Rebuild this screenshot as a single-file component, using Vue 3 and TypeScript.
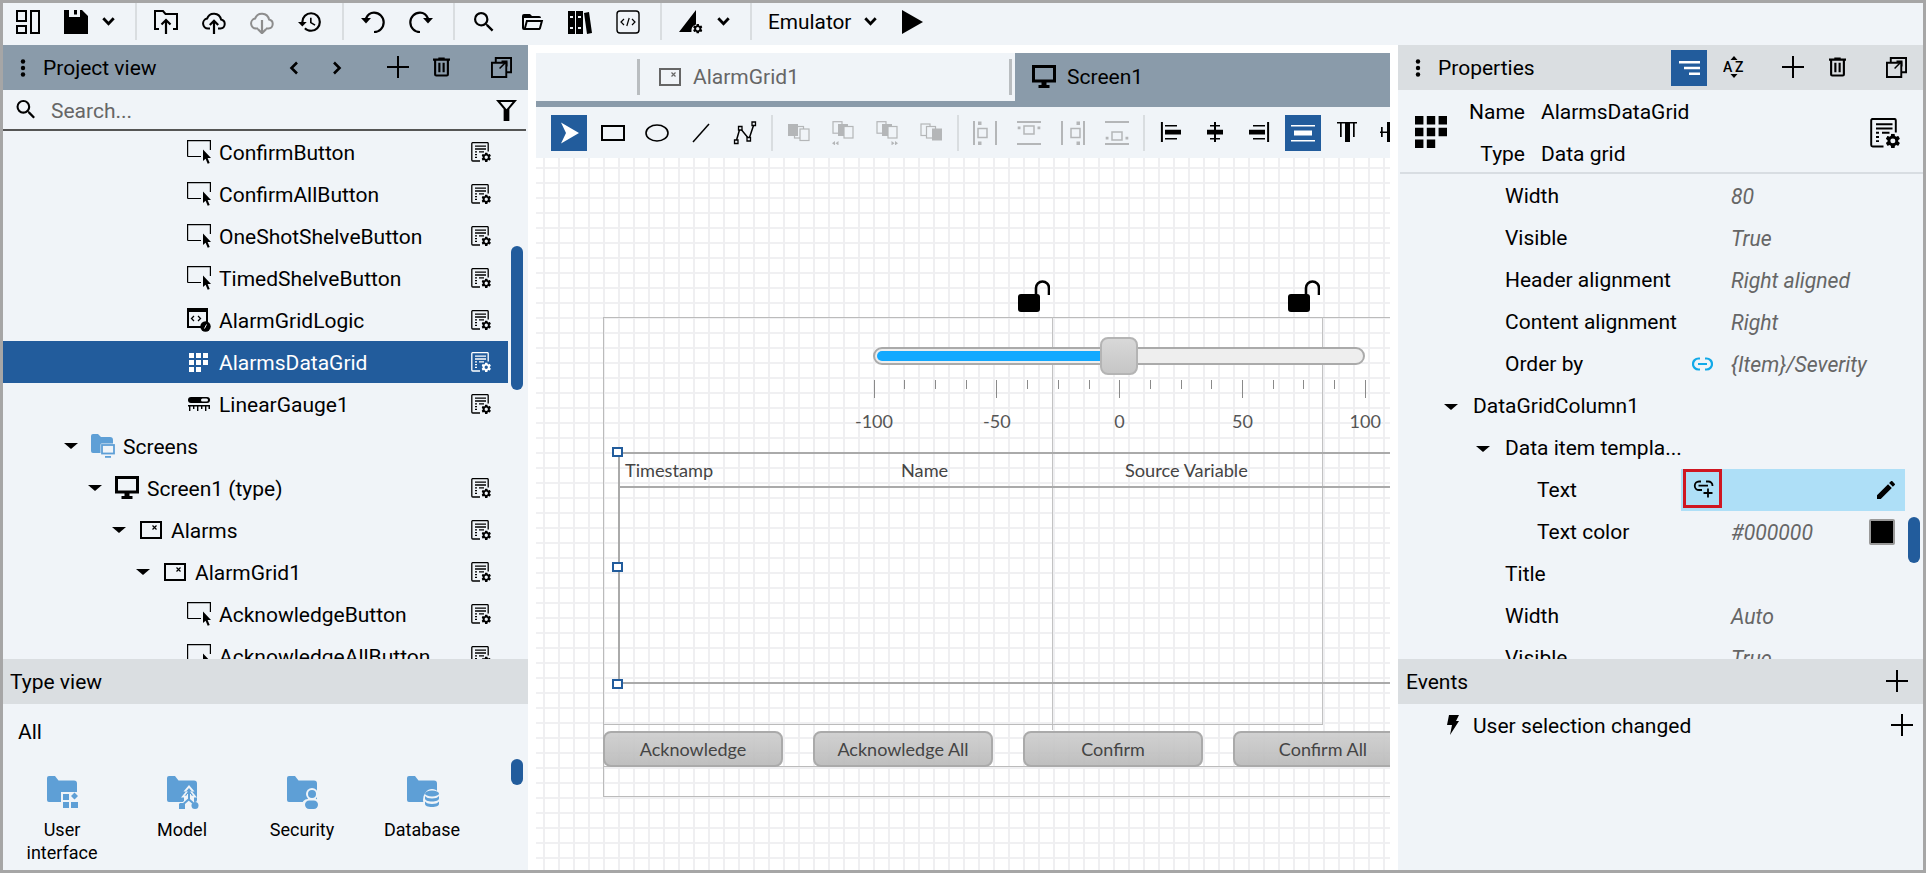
<script setup lang="ts">
interface TreeRow {
  label: string
  level: number
  icon: string
  open?: boolean
  selected?: boolean
  doc?: boolean
}

interface PropRow {
  label: string
  level: number
  value?: string
  caret?: boolean
  link?: string
  pencil?: boolean
  swatch?: boolean
  active?: boolean
}

const treeRows: TreeRow[] = [
  { label: 'ConfirmButton', level: 4, icon: 'button', doc: true },
  { label: 'ConfirmAllButton', level: 4, icon: 'button', doc: true },
  { label: 'OneShotShelveButton', level: 4, icon: 'button', doc: true },
  { label: 'TimedShelveButton', level: 4, icon: 'button', doc: true },
  { label: 'AlarmGridLogic', level: 4, icon: 'script', doc: true },
  { label: 'AlarmsDataGrid', level: 4, icon: 'grid', doc: true, selected: true },
  { label: 'LinearGauge1', level: 4, icon: 'gauge', doc: true },
  { label: 'Screens', level: 0, icon: 'screens', open: true },
  { label: 'Screen1 (type)', level: 1, icon: 'monitor', open: true, doc: true },
  { label: 'Alarms', level: 2, icon: 'panel', open: true, doc: true },
  { label: 'AlarmGrid1', level: 3, icon: 'panel', open: true, doc: true },
  { label: 'AcknowledgeButton', level: 4, icon: 'button', doc: true },
  { label: 'AcknowledgeAllButton', level: 4, icon: 'button', doc: true },
]

const typeItems = [
  { label: 'User interface', icon: 'type-ui' },
  { label: 'Model', icon: 'type-model' },
  { label: 'Security', icon: 'type-security' },
  { label: 'Database', icon: 'type-db' },
]

const propRows: PropRow[] = [
  { label: 'Width', level: 1, value: '80' },
  { label: 'Visible', level: 1, value: 'True' },
  { label: 'Header alignment', level: 1, value: 'Right aligned' },
  { label: 'Content alignment', level: 1, value: 'Right' },
  { label: 'Order by', level: 1, value: '{Item}/Severity', link: 'i-link' },
  { label: 'DataGridColumn1', level: 0, caret: true },
  { label: 'Data item templa...', level: 1, caret: true },
  { label: 'Text', level: 2, link: 'i-link-plus', pencil: true, active: true },
  { label: 'Text color', level: 2, value: '#000000', swatch: true },
  { label: 'Title', level: 1 },
  { label: 'Width', level: 1, value: 'Auto' },
  { label: 'Visible', level: 1, value: 'True' },
]

const toolIcons = [
  { id: 'i-select', active: true },
  { id: 'i-rect' },
  { id: 'i-ellipse' },
  { id: 'i-line' },
  { id: 'i-polyline' },
  { id: 'sep' },
  { id: 'i-front', off: true },
  { id: 'i-forward', off: true },
  { id: 'i-backward', off: true },
  { id: 'i-back', off: true },
  { id: 'sep' },
  { id: 'i-dist-h', off: true },
  { id: 'i-dist-v', off: true },
  { id: 'i-dist-h2', off: true },
  { id: 'i-dist-v2', off: true },
  { id: 'sep' },
  { id: 'i-align-l' },
  { id: 'i-align-c' },
  { id: 'i-align-r' },
  { id: 'i-align-m', active: true },
  { id: 'i-align-t' },
  { id: 'i-align-n' },
]

const scaleTicks = Array.from({ length: 17 }, (_, i) => ({
  left: 337.7 + i * 30.69,
  major: i % 4 === 0,
}))

const scaleLabels = ['-100', '-50', '0', '50', '100'].map((text, i) => ({
  text,
  left: 338 + i * 122.8,
}))

const gridHeaders = [
  { text: 'Timestamp', left: 89 },
  { text: 'Name', left: 365 },
  { text: 'Source Variable', left: 589 },
]

const gridButtons = ['Acknowledge', 'Acknowledge All', 'Confirm', 'Confirm All'].map((text, i) => ({
  text,
  left: 67 + i * 210,
}))

const handleTops = [289, 404, 521]
</script>

<template>
  <div class="frame">
    <svg class="sprite" aria-hidden="true">
      <symbol id="i-layout" viewBox="0 0 24 24">
        <path d="M1 1h9v10H1zM1 16h9v7H1zM15 1h8v22h-8z" fill="none" stroke="currentColor" stroke-width="2" />
      </symbol>
      <symbol id="i-save" viewBox="0 0 24 24">
        <path fill-rule="evenodd" d="M0 0h18l6 6v18H0zM5 0v7h11V0h-3v4.500h-3V0z" fill="currentColor" />
      </symbol>
      <symbol id="i-chevron" viewBox="0 0 12 10">
        <path d="M1.200 2 6 7l4.800-5" fill="none" stroke="currentColor" stroke-width="2.600" />
      </symbol>
      <symbol id="i-publish" viewBox="0 0 24 24">
        <path d="M5 19H1V1h8l2.500 3H23v15h-4" fill="none" stroke="currentColor" stroke-width="2" />
        <path d="M12 24V10M7.500 14.500 12 10l4.500 4.500" fill="none" stroke="currentColor" stroke-width="2.200" />
      </symbol>
      <symbol id="i-cloud-up" viewBox="0 0 24 24">
        <path d="M8 18.500H6a5 5 0 0 1-.9-9.900A7.200 7.200 0 0 1 19 9.400a4.600 4.600 0 0 1-.6 9.100H16" fill="none" stroke="currentColor" stroke-width="2" />
        <path d="M12 24V11M7.800 15 12 10.800 16.200 15" fill="none" stroke="currentColor" stroke-width="2.200" />
      </symbol>
      <symbol id="i-cloud-down" viewBox="0 0 24 24">
        <path d="M8 18.500H6a5 5 0 0 1-.9-9.900A7.200 7.200 0 0 1 19 9.400a4.600 4.600 0 0 1-.6 9.100H16" fill="none" stroke="currentColor" stroke-width="2" />
        <path d="M12 10v13M7.800 19 12 23.200 16.200 19" fill="none" stroke="currentColor" stroke-width="2.200" />
      </symbol>
      <symbol id="i-history" viewBox="1 2 22 20">
        <path fill="currentColor" d="M13.500,8H12V13L16.280,15.540L17,14.330L13.500,12.250V8M13,3A9,9 0 0,0 4,12H1L4.960,16.030L9,12H6A7,7 0 0,1 13,5A7,7 0 0,1 20,12A7,7 0 0,1 13,19C11.070,19 9.320,18.210 8.060,16.940L6.640,18.360C8.270,20 10.500,21 13,21A9,9 0 0,0 22,12A9,9 0 0,0 13,3Z" />
      </symbol>
      <symbol id="i-undo" viewBox="0 0 24 24">
        <path d="M5 8.500C6.400 5 9.200 2.600 13 2.600a9.700 9.700 0 0 1 0 19.400" fill="none" stroke="currentColor" stroke-width="2.200" />
        <path d="M0 8h10l-5 5.600z" fill="currentColor" />
      </symbol>
      <symbol id="i-redo" viewBox="0 0 24 24">
        <path d="M19 8.500C17.600 5 14.800 2.600 11 2.600a9.700 9.700 0 0 0 0 19.400" fill="none" stroke="currentColor" stroke-width="2.200" />
        <path d="M24 8H14l5 5.600z" fill="currentColor" />
      </symbol>
      <symbol id="i-search" viewBox="3 3 18 18">
        <path fill="currentColor" d="M9.500,3A6.500,6.500 0 0,1 16,9.500C16,11.110 15.410,12.590 14.440,13.730L14.710,14H15.500L20.500,19L19,20.500L14,15.500V14.710L13.730,14.440C12.590,15.410 11.110,16 9.500,16A6.500,6.500 0 0,1 3,9.500A6.500,6.500 0 0,1 9.500,3M9.500,5C7,5 5,7 5,9.500C5,12 7,14 9.500,14C12,14 14,12 14,9.500C14,7 12,5 9.500,5Z" />
      </symbol>
      <symbol id="i-folder" viewBox="0 0 24 24">
        <path fill="currentColor" d="M6.100,10L4,18V8H21A2,2 0 0,0 19,6H12L10,4H4A2,2 0 0,0 2,6V18A2,2 0 0,0 4,20H19C19.900,20 20.700,19.400 20.900,18.500L23.200,10H6.100M19,18H6L7.600,12H20.600L19,18Z" />
      </symbol>
      <symbol id="i-books" viewBox="0 0 24 24">
        <path fill-rule="evenodd" fill="currentColor" d="M0 1h7v23H0zM8 1h7v23H8zM16 3l5-1 3 21-5 1zM2 6v2h3V6zM10 6v2h3V6zM2 17v2h3v-2zM10 17v2h3v-2z" />
      </symbol>
      <symbol id="i-code" viewBox="0 0 24 24">
        <rect x="1" y="1" width="22" height="22" rx="3" fill="none" stroke="currentColor" stroke-width="1.400" />
        <path d="M8 9l-3 3 3 3M16 9l3 3-3 3M13.200 8l-2.400 8" fill="none" stroke="currentColor" stroke-width="1.200" />
      </symbol>
      <symbol id="i-cog" viewBox="2 2 20 20">
        <path fill="currentColor" d="M12,15.500A3.500,3.500 0 0,1 8.500,12A3.500,3.500 0 0,1 12,8.500A3.500,3.500 0 0,1 15.500,12A3.500,3.500 0 0,1 12,15.500M19.430,12.970C19.470,12.650 19.500,12.330 19.500,12C19.500,11.670 19.470,11.340 19.430,11L21.540,9.370C21.730,9.220 21.780,8.950 21.660,8.730L19.660,5.270C19.540,5.050 19.270,4.960 19.050,5.050L16.560,6.050C16.040,5.660 15.500,5.320 14.870,5.070L14.500,2.420C14.460,2.180 14.250,2 14,2H10C9.750,2 9.540,2.180 9.500,2.420L9.130,5.070C8.500,5.320 7.960,5.660 7.440,6.050L4.950,5.050C4.730,4.960 4.460,5.050 4.340,5.270L2.340,8.730C2.210,8.950 2.270,9.220 2.460,9.370L4.570,11C4.530,11.340 4.500,11.670 4.500,12C4.500,12.330 4.530,12.650 4.570,12.970L2.460,14.630C2.270,14.780 2.210,15.050 2.340,15.270L4.340,18.730C4.460,18.950 4.730,19.030 4.950,18.950L7.440,17.940C7.960,18.340 8.500,18.680 9.130,18.930L9.500,21.580C9.540,21.820 9.750,22 10,22H14C14.250,22 14.460,21.820 14.500,21.580L14.870,18.930C15.500,18.670 16.040,18.340 16.560,17.940L19.050,18.950C19.270,19.030 19.540,18.950 19.660,18.730L21.660,15.270C21.780,15.050 21.730,14.780 21.540,14.630L19.430,12.970Z" />
      </symbol>
      <symbol id="i-tool" viewBox="0 0 24 24">
        <path d="M17 0v14.500a6.500 6.500 0 0 0-4.600 7.500H0z" fill="currentColor" />
        <use href="#i-cog" x="14" y="14" width="9.500" height="9.500" />
      </symbol>
      <symbol id="i-play" viewBox="0 0 21 24">
        <path d="M0 0l21 12L0 24z" fill="currentColor" />
      </symbol>
      <symbol id="i-dots" viewBox="0 0 6 18">
        <circle cx="3" cy="2.500" r="2.200" fill="currentColor" />
        <circle cx="3" cy="9" r="2.200" fill="currentColor" />
        <circle cx="3" cy="15.500" r="2.200" fill="currentColor" />
      </symbol>
      <symbol id="i-left" viewBox="0 0 10 14">
        <path d="M8 1.500 2.500 7 8 12.500" fill="none" stroke="currentColor" stroke-width="2.600" />
      </symbol>
      <symbol id="i-right" viewBox="0 0 10 14">
        <path d="M2 1.500 7.500 7 2 12.500" fill="none" stroke="currentColor" stroke-width="2.600" />
      </symbol>
      <symbol id="i-plus" viewBox="0 0 22 22">
        <path d="M11 0v22M0 11h22" fill="none" stroke="currentColor" stroke-width="2" />
      </symbol>
      <symbol id="i-trash" viewBox="4 3 16 18">
        <path fill="currentColor" d="M9,3V4H4V6H5V19A2,2 0 0,0 7,21H17A2,2 0 0,0 19,19V6H20V4H15V3H9M7,6H17V19H7V6M9,8V17H11V8H9M13,8V17H15V8H13Z" />
      </symbol>
      <symbol id="i-popout" viewBox="0 0 22 22">
        <path d="M5 5V1h16v15h-4M1 6h15v15H1z" fill="none" stroke="currentColor" stroke-width="2" />
        <path d="M9 12l7-7M11 4.500h5.500V10" fill="none" stroke="currentColor" stroke-width="1.600" />
      </symbol>
      <symbol id="i-filter" viewBox="0 0 22 22">
        <path fill-rule="evenodd" fill="currentColor" d="M0 0h22l-8 9.500V22H8V9.500zM4.600 2.200 11 9.800l6.400-7.600z" />
      </symbol>
      <symbol id="i-doc" viewBox="0 0 20 20">
        <path d="M9 19H1.800a1 1 0 0 1-1-1V1.600a1 1 0 0 1 1-1h14.400a1 1 0 0 1 1 1v8" fill="none" stroke="currentColor" stroke-width="1.300" />
        <path d="M4 4.200h11M4 7h11M4 9.800h2M8 9.800h5M4 12.600h2M4 15.400h2" fill="none" stroke="currentColor" stroke-width="1.300" />
        <use href="#i-cog" x="10.500" y="10.500" width="9.500" height="9.500" />
      </symbol>
      <symbol id="i-button" viewBox="0 0 24 24">
        <path d="M.6 16.500V.6h22.800V10M.6 16.500H14" fill="none" stroke="currentColor" stroke-width="1.200" />
        <path d="M16 9.500V21l2.600-2.300 2.100 5.100 2-.9-2.100-4.800 3.400-.2z" fill="currentColor" />
      </symbol>
      <symbol id="i-script" viewBox="0 0 24 24">
        <path d="M1 1h19v14M1 1v18h13" fill="none" stroke="currentColor" stroke-width="2" />
        <rect x="0" y="0" width="21" height="4" fill="currentColor" />
        <path d="M7 8 4.500 10.500 7 13M11 8l2.500 2.500L11 13" fill="none" stroke="currentColor" stroke-width="1.300" />
        <circle cx="18.500" cy="18.500" r="5.200" fill="currentColor" />
        <path d="M17.500 20.500l2-4" stroke="#f0f4f8" stroke-width="1" />
      </symbol>
      <symbol id="i-grid" viewBox="0 0 19 19">
        <path fill="currentColor" d="M0 0h5v5H0zM7 0h5v5H7zM14 0h5v5h-5zM0 7h5v5H0zM7 7h5v5H7zM14 7h5v5h-5zM0 14h5v5H0zM7 14h5v5H7z" />
      </symbol>
      <symbol id="i-gauge" viewBox="0 0 22 14">
        <rect x="0" y="0" width="22" height="6" rx="3" fill="currentColor" />
        <rect x="13" y="1.500" width="7" height="3" rx="1.500" fill="#f0f4f8" />
        <path d="M0 8h22v1.500H0zM1 9h1.400v5H1zM5 9h1.400v3H5zM9 9h1.400v5H9zM13 9h1.400v3H13zM17 9h1.400v5H17zM20.500 9H22v3h-1.500z" fill="currentColor" />
      </symbol>
      <symbol id="i-screens" viewBox="0 0 24 24">
        <path d="M0 2a2 2 0 0 1 2-2h5l3 3h9a3 3 0 0 1 3 3v13H2a2 2 0 0 1-2-2z" fill="#5e9fd6" />
        <rect x="9.500" y="9.500" width="14" height="11" rx="1.400" fill="#f0f4f8" />
        <rect x="11" y="11" width="12" height="8.500" fill="none" stroke="#5e9fd6" stroke-width="1.800" />
        <path d="M14 22h6v1.800h-6z" fill="#5e9fd6" />
      </symbol>
      <symbol id="i-monitor" viewBox="0 0 24 24">
        <path d="M1.500 1.500h21V16h-21z" fill="none" stroke="currentColor" stroke-width="3" />
        <path d="M9.500 17h5v3h3v3H6.500v-3h3z" fill="currentColor" />
      </symbol>
      <symbol id="i-panel" viewBox="0 0 22 18">
        <path d="M1 1h20v16H1z" fill="none" stroke="currentColor" stroke-width="2" />
        <path d="M12.500 4.500l4 4M16.500 4.500l-4 4" fill="none" stroke="currentColor" stroke-width="1.200" />
      </symbol>
      <symbol id="i-folder-blue" viewBox="0 0 30 26">
        <path d="M0 2a2 2 0 0 1 2-2h6l3.500 4.500H27a3 3 0 0 1 3 3V24a2 2 0 0 1-2 2H2a2 2 0 0 1-2-2z" fill="#5e9fd6" />
      </symbol>
      <symbol id="i-type-ui" viewBox="0 0 32 33">
        <use href="#i-folder-blue" width="30" height="26" />
        <rect x="14" y="16" width="18" height="17" fill="#f0f4f8" />
        <path d="M16 18h6v6h-6zM16 26h6v6h-6zM24 26h7v6h-7zM27.500 16.500l3.500 3.500-3.500 3.500-3.500-3.500z" fill="#5e9fd6" />
      </symbol>
      <symbol id="i-type-model" viewBox="0 0 32 33">
        <use href="#i-folder-blue" width="30" height="26" />
        <path d="M22 9l-5.500 6.500H19l-5 6h3v5h10v-5h3l-5-6h2.500z" fill="#f0f4f8" />
        <path d="M22 12l-3 3.500h2L17.500 20l4.500-1.500L26.500 20 23 15.500h2z" fill="#5e9fd6" />
        <path d="M12 33v-5h4.500l5-4.500M22 18v5.500l4 3.500" fill="none" stroke="#f0f4f8" stroke-width="4" />
        <path d="M14 31v-3h2.500l5-4.500M22 18v5.500l4 3.500" fill="none" stroke="#5e9fd6" stroke-width="2" />
        <path d="M12 27.500h6V33h-6z" fill="#5e9fd6" />
        <circle cx="28" cy="29.500" r="3.500" fill="#5e9fd6" />
      </symbol>
      <symbol id="i-type-security" viewBox="0 0 32 33">
        <use href="#i-folder-blue" width="30" height="26" />
        <circle cx="25" cy="18" r="6" fill="#f0f4f8" />
        <path d="M15 33v-3a6 6 0 0 1 6-7h8a3 3 0 0 1 3 3v7z" fill="#f0f4f8" />
        <circle cx="25" cy="18" r="4" fill="#5e9fd6" />
        <rect x="18" y="24.500" width="13" height="8.500" rx="4.200" fill="#5e9fd6" />
      </symbol>
      <symbol id="i-type-db" viewBox="0 0 32 33">
        <use href="#i-folder-blue" width="30" height="26" />
        <ellipse cx="25" cy="24" rx="9" ry="11" fill="#f0f4f8" />
        <ellipse cx="25" cy="17.500" rx="7" ry="3" fill="#5e9fd6" />
        <path d="M18 20v2.500c0 1.700 3 3 7 3s7-1.300 7-3V20c-1 1.700-4 2.500-7 2.500S19 21.700 18 20zM18 25.500V28c0 1.700 3 3 7 3s7-1.300 7-3v-2.500c-1 1.700-4 2.500-7 2.500s-6-.8-7-2.500z" fill="#5e9fd6" />
      </symbol>
      <symbol id="i-sort" viewBox="0 0 21 14">
        <path d="M0 1.200h21M5 7h16M10 12.800h11" fill="none" stroke="currentColor" stroke-width="2.400" />
      </symbol>
      <symbol id="i-link" viewBox="0 0 21 14">
        <path d="M8 1.500H6.500a5.500 5.500 0 0 0 0 11H8M13 1.500h1.500a5.500 5.500 0 0 1 0 11H13M6 7h9" fill="none" stroke="currentColor" stroke-width="2.200" />
      </symbol>
      <symbol id="i-link-plus" viewBox="0 0 21 18">
        <path d="M8 1.500H6a4.200 4.200 0 0 0 0 8.500h3M13 1.500h2a4.200 4.200 0 0 1 4.500 4.500M5.500 5.700H15" fill="none" stroke="currentColor" stroke-width="1.800" />
        <path d="M15 8.500v9M10.500 13h9" fill="none" stroke="currentColor" stroke-width="1.800" />
      </symbol>
      <symbol id="i-pencil" viewBox="3 3 18 18">
        <path fill="currentColor" d="M20.710,7.040C21.100,6.650 21.100,6 20.710,5.630L18.370,3.290C18,2.900 17.350,2.900 16.960,3.290L15.120,5.120L18.870,8.870M3,17.250V21H6.750L17.810,9.930L14.060,6.180L3,17.250Z" />
      </symbol>
      <symbol id="i-bolt" viewBox="0 0 12 20">
        <path d="M2 0h10L9 6h3L3 20l2-10H0z" fill="currentColor" />
      </symbol>
      <symbol id="i-select" viewBox="0 0 24 24">
        <path d="M4 1.500 22 12 4 22.500 9 12z" fill="currentColor" />
      </symbol>
      <symbol id="i-rect" viewBox="0 0 24 24">
        <rect x="1" y="5" width="22" height="14" fill="none" stroke="currentColor" stroke-width="2" />
      </symbol>
      <symbol id="i-ellipse" viewBox="0 0 24 24">
        <ellipse cx="12" cy="12" rx="11" ry="8" fill="none" stroke="currentColor" stroke-width="1.600" />
      </symbol>
      <symbol id="i-line" viewBox="0 0 24 24">
        <path d="M4 21 20 3" fill="none" stroke="currentColor" stroke-width="1.500" />
      </symbol>
      <symbol id="i-polyline" viewBox="0 0 24 24">
        <path d="M3 21 7 7l9 11L21 3" fill="none" stroke="currentColor" stroke-width="1.500" />
        <path d="M1.500 19h3.500v3.500H1.500zM5.500 5.500H9V9H5.500zM14 16.500h3.500V20H14zM19 1h3.500v3.500H19z" fill="#f0f4f8" stroke="currentColor" stroke-width="1.300" />
      </symbol>
      <symbol id="i-front" viewBox="0 0 24 24">
        <rect x="1" y="3" width="10" height="12" fill="currentColor" />
        <rect x="7.500" y="5.500" width="9" height="11.500" fill="none" stroke="currentColor" stroke-width="1.200" />
        <rect x="13" y="8" width="9" height="11.500" fill="#f0f4f8" stroke="currentColor" stroke-width="1.200" />
      </symbol>
      <symbol id="i-forward" viewBox="0 0 24 24">
        <rect x="2" y=".7" width="9" height="11.500" fill="none" stroke="currentColor" stroke-width="1.200" />
        <rect x="7" y="3" width="10" height="12" fill="currentColor" />
        <rect x="13" y="5.500" width="9" height="11.500" fill="#f0f4f8" stroke="currentColor" stroke-width="1.200" />
        <path d="M4 20l-3 2.200L4 24.400zM7.500 20l-3 2.200 3 2.200z" fill="currentColor" />
      </symbol>
      <symbol id="i-backward" viewBox="0 0 24 24">
        <rect x="2" y=".7" width="9" height="11.500" fill="none" stroke="currentColor" stroke-width="1.200" />
        <rect x="7" y="3" width="10" height="12" fill="currentColor" />
        <rect x="13" y="5.500" width="9" height="11.500" fill="#f0f4f8" stroke="currentColor" stroke-width="1.200" />
        <path d="M16.500 20l3 2.200-3 2.200zM20 20l3 2.200-3 2.200z" fill="currentColor" />
      </symbol>
      <symbol id="i-back" viewBox="0 0 24 24">
        <rect x="2" y="3" width="9" height="11.500" fill="none" stroke="currentColor" stroke-width="1.200" />
        <rect x="7.500" y="5.500" width="9" height="11.500" fill="#f0f4f8" stroke="currentColor" stroke-width="1.200" />
        <rect x="13" y="7.500" width="10" height="12" fill="currentColor" />
      </symbol>
      <symbol id="i-dist-h" viewBox="0 0 24 24">
        <path d="M1 0v24M23 0v24" fill="none" stroke="currentColor" stroke-width="2" />
        <path d="M5 .5h3.500V4H5zM5 20.500h3.500V24H5z" fill="currentColor" />
        <rect x="5" y="7.500" width="9" height="9" fill="none" stroke="currentColor" stroke-width="1.500" />
      </symbol>
      <symbol id="i-dist-v" viewBox="0 0 24 24">
        <path d="M0 1h24M0 23h24" fill="none" stroke="currentColor" stroke-width="1.800" />
        <path d="M.7 5.500h2.800v2.800H.7zM20.500 5.500h2.800v2.800h-2.800z" fill="currentColor" />
        <rect x="7" y="5" width="10" height="8" fill="none" stroke="currentColor" stroke-width="1.500" />
      </symbol>
      <symbol id="i-dist-h2" viewBox="0 0 24 24">
        <path d="M1 0v24M23 0v24" fill="none" stroke="currentColor" stroke-width="2" />
        <path d="M15.500 .5H19V4h-3.500zM15.500 20.500H19V24h-3.500z" fill="currentColor" />
        <rect x="10" y="7.500" width="9" height="9" fill="none" stroke="currentColor" stroke-width="1.500" />
      </symbol>
      <symbol id="i-dist-v2" viewBox="0 0 24 24">
        <path d="M0 1h24M0 23h24" fill="none" stroke="currentColor" stroke-width="1.800" />
        <path d="M.7 15.700h2.800v2.800H.7zM20.500 15.700h2.800v2.800h-2.800z" fill="currentColor" />
        <rect x="7" y="11" width="10" height="8" fill="none" stroke="currentColor" stroke-width="1.500" />
      </symbol>
      <symbol id="i-align-l" viewBox="-1 -1 24 24">
        <path d="M1.900 0v20" stroke="currentColor" stroke-width="2" />
        <path d="M5 3h12v1.500H5zM5 7.700h16v4.700H5zM5 16h12v1.500H5z" fill="currentColor" />
      </symbol>
      <symbol id="i-align-c" viewBox="-1 -1 24 24">
        <path d="M11 0v20" stroke="currentColor" stroke-width="2" />
        <path d="M6 3h10v1.500H6zM3 7.700h16v4.700H3zM6 16h10v1.500H6z" fill="currentColor" />
      </symbol>
      <symbol id="i-align-r" viewBox="-1 -1 24 24">
        <path d="M20.100 0v20" stroke="currentColor" stroke-width="2" />
        <path d="M5 3h12v1.500H5zM1 7.700h16v4.700H1zM5 16h12v1.500H5z" fill="currentColor" />
      </symbol>
      <symbol id="i-align-m" viewBox="0 0 24 24">
        <path d="M0 4h24v1.500H0zM0 19h24v1.500H0zM3 9.500h18v5H3z" fill="currentColor" />
      </symbol>
      <symbol id="i-align-t" viewBox="-1 -1 24 24">
        <path d="M1 0h20v1.500H1zM4 1.500h1.700V15H4zM9 1.500h5V20H9zM17 1.500h1.700V15H17z" fill="currentColor" />
      </symbol>
      <symbol id="i-align-n" viewBox="-1 -1 24 24">
        <path d="M1 5h1.700v10H1zM0 9.500h22V11H0zM7 0h5v20H7z" fill="currentColor" />
      </symbol>
    </svg>

    <header class="toolbar">
      <div class="tool-group first">
        <svg class="ico-24"><use href="#i-layout" /></svg>
        <svg class="ico-24"><use href="#i-save" /></svg>
        <svg class="chev tight"><use href="#i-chevron" /></svg>
      </div>
      <div class="tool-group">
        <svg class="ico-24"><use href="#i-publish" /></svg>
        <svg class="ico-24"><use href="#i-cloud-up" /></svg>
        <svg class="ico-24 muted"><use href="#i-cloud-down" /></svg>
        <svg class="ico-24"><use href="#i-history" /></svg>
      </div>
      <div class="tool-group">
        <svg class="ico-24"><use href="#i-undo" /></svg>
        <svg class="ico-24"><use href="#i-redo" /></svg>
      </div>
      <div class="tool-group">
        <svg class="ico-24 small"><use href="#i-search" /></svg>
        <svg class="ico-24"><use href="#i-folder" /></svg>
        <svg class="ico-24"><use href="#i-books" /></svg>
        <svg class="ico-24"><use href="#i-code" /></svg>
      </div>
      <div class="tool-group">
        <svg class="ico-24"><use href="#i-tool" /></svg>
        <svg class="chev tight"><use href="#i-chevron" /></svg>
      </div>
      <div class="tool-group last">
        <span class="emulator">Emulator</span>
        <svg class="chev"><use href="#i-chevron" /></svg>
        <svg class="play"><use href="#i-play" /></svg>
      </div>
    </header>

    <main class="main">
      <aside class="left">
        <div class="pane-head dark">
          <svg class="dots"><use href="#i-dots" /></svg>
          <span class="pane-title">Project view</span>
          <svg class="nav nav-left"><use href="#i-left" /></svg>
          <svg class="nav nav-right"><use href="#i-right" /></svg>
          <svg class="plus head-plus"><use href="#i-plus" /></svg>
          <svg class="trash"><use href="#i-trash" /></svg>
          <svg class="popout"><use href="#i-popout" /></svg>
        </div>
        <div class="search">
          <svg class="search-ico"><use href="#i-search" /></svg>
          <span class="search-text">Search...</span>
          <svg class="filter"><use href="#i-filter" /></svg>
        </div>
        <div class="tree">
          <div
            v-for="row in treeRows"
            :key="row.label"
            class="tree-row"
            :class="{ selected: row.selected }"
            :style="{ paddingLeft: `${61 + row.level * 24}px` }"
          >
            <span class="caret-slot"><span v-if="row.open" class="caret" /></span>
            <svg class="tree-ico" :class="`ico-${row.icon}`"><use :href="`#i-${row.icon}`" /></svg>
            <span class="tree-label">{{ row.label }}</span>
            <svg v-if="row.doc" class="doc"><use href="#i-doc" /></svg>
          </div>
          <div class="thumb tree-thumb" />
        </div>
        <div class="pane-head light">
          <span class="sub-title">Type view</span>
        </div>
        <div class="types">
          <div class="types-all">All</div>
          <div class="type-grid">
            <div v-for="item in typeItems" :key="item.label" class="type-item">
              <svg class="type-ico"><use :href="`#i-${item.icon}`" /></svg>
              <span class="type-label">{{ item.label }}</span>
            </div>
          </div>
          <div class="thumb types-thumb" />
        </div>
      </aside>

      <section class="center">
        <div class="tabs">
          <div class="tab-gap" />
          <div class="tab">
            <div class="tab-inner">
              <svg class="tab-ico"><use href="#i-panel" /></svg>
              <span>AlarmGrid1</span>
            </div>
          </div>
          <div class="tab active">
            <svg class="tab-monitor"><use href="#i-monitor" /></svg>
            <span>Screen1</span>
          </div>
        </div>
        <div class="draw-tools">
          <template v-for="(tool, i) in toolIcons" :key="i">
            <span v-if="tool.id === 'sep'" class="draw-sep" />
            <span v-else class="draw-btn" :class="{ active: tool.active, off: tool.off }">
              <svg class="draw-ico"><use :href="`#${tool.id}`" /></svg>
            </span>
          </template>
        </div>
        <div class="canvas">
          <div class="outer" />
          <div class="vline" style="left: 516px; top: 159px; height: 413px" />
          <div class="vline" style="left: 786px; top: 159px; height: 407px" />
          <div class="hline" style="left: 67px; top: 566px; width: 720px" />
          <div class="hline" style="left: 67px; top: 608px; width: 900px" />

          <svg class="lock" style="left: 482px" viewBox="0 0 32 32">
            <path d="M18 16V8a6.500 6.500 0 0 1 13 0v7" fill="none" stroke="#000" stroke-width="2.600" />
            <rect x="0" y="14" width="22" height="18" rx="3" fill="#000" />
          </svg>
          <svg class="lock" style="left: 752px" viewBox="0 0 32 32">
            <path d="M18 16V8a6.500 6.500 0 0 1 13 0v7" fill="none" stroke="#000" stroke-width="2.600" />
            <rect x="0" y="14" width="22" height="18" rx="3" fill="#000" />
          </svg>

          <div class="track"><div class="fill" /></div>
          <div class="knob" />
          <div
            v-for="tick in scaleTicks"
            :key="tick.left"
            class="tick"
            :class="{ major: tick.major }"
            :style="{ left: `${tick.left}px` }"
          />
          <span
            v-for="label in scaleLabels"
            :key="label.text"
            class="scale-label"
            :style="{ left: `${label.left}px` }"
          >{{ label.text }}</span>

          <div class="grid-line top" />
          <div class="grid-line head" />
          <div class="grid-line bottom" />
          <div class="grid-line side" />
          <span
            v-for="head in gridHeaders"
            :key="head.text"
            class="grid-head"
            :style="{ left: `${head.left}px` }"
          >{{ head.text }}</span>
          <div
            v-for="top in handleTops"
            :key="top"
            class="handle"
            :style="{ top: `${top}px` }"
          />

          <div
            v-for="btn in gridButtons"
            :key="btn.text"
            class="grid-btn"
            :style="{ left: `${btn.left}px` }"
          >{{ btn.text }}</div>
        </div>
      </section>

      <aside class="right">
        <div class="pane-head light">
          <svg class="dots props-dots"><use href="#i-dots" /></svg>
          <span class="pane-title props-title">Properties</span>
          <span class="sort-btn"><svg class="sort"><use href="#i-sort" /></svg></span>
          <svg class="az" viewBox="0 0 22 22">
            <path d="M11 0 7.500 4h7zM11 22l-3.500-4h7z" fill="currentColor" />
            <text x="0" y="16" class="az-text">A</text>
            <text x="12" y="16" class="az-text">Z</text>
          </svg>
          <svg class="plus props-plus"><use href="#i-plus" /></svg>
          <svg class="trash props-trash"><use href="#i-trash" /></svg>
          <svg class="popout props-popout"><use href="#i-popout" /></svg>
        </div>
        <div class="info">
          <svg class="info-grid"><use href="#i-grid" /></svg>
          <div class="info-table">
            <span class="info-key">Name</span><span>AlarmsDataGrid</span>
            <span class="info-key">Type</span><span>Data grid</span>
          </div>
          <svg class="info-doc"><use href="#i-doc" /></svg>
        </div>
        <div class="props">
          <div
            v-for="(row, i) in propRows"
            :key="i"
            class="prop-row"
          >
            <div class="prop-label" :style="{ paddingLeft: `${75 + row.level * 32}px` }">
              <span v-if="row.caret" class="caret prop-caret" />
              {{ row.label }}
            </div>
            <div class="prop-value" :class="{ active: row.active }">
              <span class="link-slot" :class="{ boxed: row.active }">
                <svg v-if="row.link" class="link" :class="row.link"><use :href="`#${row.link}`" /></svg>
              </span>
              <span class="value-text">{{ row.value }}</span>
              <svg v-if="row.pencil" class="pencil"><use href="#i-pencil" /></svg>
              <span v-if="row.swatch" class="swatch" />
            </div>
          </div>
          <div class="thumb props-thumb" />
        </div>
        <div class="pane-head light">
          <span class="sub-title events-title">Events</span>
          <svg class="plus events-plus"><use href="#i-plus" /></svg>
        </div>
        <div class="events">
          <div class="event-row">
            <svg class="bolt"><use href="#i-bolt" /></svg>
            <span class="event-label">User selection changed</span>
            <svg class="plus event-plus"><use href="#i-plus" /></svg>
          </div>
        </div>
      </aside>
    </main>
  </div>
</template>

<style>
html,
body {
  margin: 0;
  background: #fff;
}
</style>

<style scoped>
.frame {
  position: relative;
  width: 1926px;
  height: 873px;
  box-sizing: border-box;
  border: 3px solid #a6a6a6;
  background: #fff;
  display: flex;
  flex-direction: column;
  overflow: hidden;
  font-family: Roboto, sans-serif;
  font-size: 21px;
  color: #000;
}

.sprite {
  position: absolute;
  width: 0;
  height: 0;
}

/* top toolbar */
.toolbar {
  height: 42px;
  flex: none;
  display: flex;
  align-items: flex-start;
  background: #f0f4f8;
  padding-left: 13px;
}

.tool-group {
  display: flex;
  align-items: center;
  gap: 24px;
  height: 37px;
  padding: 0 20px 0 17px;
  border-right: 2px solid #d9dde0;
}

.tool-group.first {
  padding-left: 0;
}

.tool-group.last {
  border-right: 0;
  gap: 0;
}

.ico-24 {
  width: 24px;
  height: 24px;
  flex: none;
}

.ico-24.small {
  padding: 2px;
  box-sizing: border-box;
}

.muted {
  color: #8d8d8d;
}

.chev {
  width: 13px;
  height: 11px;
  margin-left: 13px;
}

.chev.tight {
  margin-left: -10px;
}

.play {
  width: 21px;
  height: 24px;
  margin-left: 25px;
}

.emulator {
  font-size: 20.800px;
  margin-left: -1px;
}

.main {
  flex: 1;
  min-height: 0;
  display: flex;
}

/* left pane */
.left {
  width: 525px;
  flex: none;
  display: flex;
  flex-direction: column;
  background: #f0f4f8;
}

.pane-head {
  position: relative;
  height: 45px;
  flex: none;
  display: flex;
  align-items: center;
}

.pane-head.dark {
  background: #8a9baa;
}

.pane-head.light {
  background: #dadee1;
}

.dots {
  width: 6px;
  height: 18px;
  margin-left: 17px;
}

.pane-title {
  margin-left: 17px;
}

.nav {
  position: absolute;
  width: 10px;
  height: 14px;
  top: 16px;
}

.nav-left {
  left: 286px;
}

.nav-right {
  left: 329px;
}

.plus {
  width: 22px;
  height: 22px;
  flex: none;
}

.head-plus {
  position: absolute;
  left: 384px;
  top: 11px;
}

.trash {
  position: absolute;
  left: 430px;
  top: 11px;
  width: 17px;
  height: 22px;
}

.popout {
  position: absolute;
  left: 488px;
  top: 12px;
  width: 21px;
  height: 21px;
}

.search {
  position: relative;
  width: 523px;
  height: 41px;
  flex: none;
  box-sizing: border-box;
  border-bottom: 2px solid #555;
  display: flex;
  align-items: center;
}

.search-ico {
  width: 20px;
  height: 19px;
  margin-left: 13px;
}

.search-text {
  margin: 2px 0 0 15px;
  color: #666;
}

.filter {
  position: absolute;
  left: 493px;
  top: 10px;
  width: 21px;
  height: 21px;
}

.tree {
  position: relative;
  flex: 1;
  min-height: 0;
  overflow: hidden;
}

.tree-row {
  position: relative;
  width: 505px;
  height: 42px;
  box-sizing: border-box;
  display: flex;
  align-items: center;
}

.tree-row.selected {
  background: #225c9c;
  color: #fff;
}

.tree-label {
  margin-top: 2px;
}

.caret-slot {
  width: 27px;
  flex: none;
  display: flex;
}

.caret {
  display: inline-block;
  width: 0;
  height: 0;
  border-left: 7px solid transparent;
  border-right: 7px solid transparent;
  border-top: 6px solid #000;
}

.tree-ico {
  width: 24px;
  height: 24px;
  flex: none;
  margin-right: 8px;
}

.ico-panel {
  width: 22px;
  height: 18px;
  margin-left: 1px;
  margin-right: 9px;
}

.ico-grid {
  width: 19px;
  height: 19px;
  margin-left: 2px;
  margin-right: 11px;
}

.ico-gauge {
  width: 22px;
  height: 14px;
  margin-left: 1px;
  margin-right: 9px;
}

.doc {
  position: absolute;
  left: 468px;
  top: 11px;
  width: 20px;
  height: 20px;
}

.thumb {
  position: absolute;
  width: 12px;
  border-radius: 6px;
  background: #225c9c;
}

.tree-thumb {
  left: 508px;
  top: 115px;
  height: 144px;
}

.sub-title {
  margin-left: 7px;
}

.types {
  position: relative;
  height: 166px;
  flex: none;
  overflow: hidden;
}

.types-all {
  margin: 17px 0 0 15px;
  height: 22px;
  line-height: 22px;
}

.type-grid {
  display: grid;
  grid-template-columns: repeat(4, 120px);
  margin: 33px 0 0 -1px;
}

.type-item {
  display: flex;
  flex-direction: column;
  align-items: center;
}

.type-ico {
  width: 32px;
  height: 33px;
  margin-left: 2px;
}

.type-label {
  margin-top: 9px;
  width: 90px;
  font-size: 18px;
  line-height: 23px;
  text-align: center;
}

.types-thumb {
  left: 508px;
  top: 55px;
  height: 26px;
}

/* center */
.center {
  flex: none;
  width: 870px;
  box-sizing: border-box;
  padding: 8px 8px 0;
  display: flex;
  flex-direction: column;
}

.tabs {
  height: 54px;
  flex: none;
  display: flex;
  border-bottom: 6px solid #8a9baa;
  box-sizing: border-box;
}

.tab-gap {
  width: 101px;
  background: #f0f4f8;
}

.tab {
  width: 378px;
  background: #f0f4f8;
  display: flex;
  align-items: center;
  color: #666;
}

.tab-inner {
  width: 100%;
  height: 36px;
  box-sizing: border-box;
  display: flex;
  align-items: center;
  gap: 12px;
  padding-left: 19px;
  border-left: 3px solid #b9bdc0;
  border-right: 3px solid #b9bdc0;
  margin-right: 3px;
}

.tab-ico {
  width: 22px;
  height: 18px;
}

.tab.active {
  flex: 1;
  background: #8a9baa;
  color: #000;
  gap: 11px;
  padding-left: 17px;
  box-sizing: border-box;
}

.tab-monitor {
  width: 24px;
  height: 24px;
}

.draw-tools {
  height: 51px;
  flex: none;
  box-sizing: border-box;
  background: #f0f4f8;
  padding: 8px 0 0 15px;
  display: flex;
  align-items: flex-start;
  overflow: hidden;
  gap: 8px;
}

.draw-btn {
  width: 36px;
  height: 36px;
  flex: none;
  display: flex;
  align-items: center;
  justify-content: center;
}

.draw-btn.active {
  background: #225c9c;
  color: #fff;
}

.draw-btn.off {
  color: #b4b6b8;
}

.draw-ico {
  width: 24px;
  height: 24px;
}

.draw-sep {
  width: 2px;
  height: 36px;
  flex: none;
  background: #d9dde0;
}

.canvas {
  position: relative;
  flex: 1;
  min-height: 0;
  overflow: hidden;
  background-color: #fff;
  background-image:
    linear-gradient(to right, #efeff1 2px, transparent 2px),
    linear-gradient(to bottom, #f0f0f2 2px, transparent 2px);
  background-size: 15px 15px;
  background-position: 7px 9px;
}

.outer {
  position: absolute;
  left: 67px;
  top: 159px;
  width: 900px;
  height: 480px;
  box-sizing: border-box;
  border: 1px solid #bbb;
}

.vline {
  position: absolute;
  width: 1px;
  background: #c2c2c2;
}

.hline {
  position: absolute;
  height: 1px;
  background: #bbb;
}

.lock {
  position: absolute;
  top: 122px;
  width: 32px;
  height: 32px;
}

.track {
  position: absolute;
  left: 337px;
  top: 189px;
  width: 492px;
  height: 18px;
  box-sizing: border-box;
  border: 2.500px solid #aaa;
  border-radius: 9px;
  background: #eee;
}

.fill {
  position: absolute;
  left: 1.500px;
  top: 1.500px;
  width: 226px;
  height: 10px;
  border-radius: 5px 0 0 5px;
  background: #12a9ff;
}

.knob {
  position: absolute;
  left: 564px;
  top: 179px;
  width: 38px;
  height: 38px;
  box-sizing: border-box;
  border: 2px solid #b4b4b4;
  border-radius: 8px;
  background: linear-gradient(#d8d8d8, #c6c6c6);
}

.tick {
  position: absolute;
  top: 222px;
  width: 1px;
  height: 9px;
  background: #8a8a8a;
}

.tick.major {
  height: 18px;
}

.scale-label {
  position: absolute;
  top: 253px;
  transform: translateX(-50%);
  font-family: Lato, sans-serif;
  font-size: 18px;
  line-height: 20px;
  color: #555;
}

.grid-line {
  position: absolute;
  background: #aaa;
}

.grid-line.top {
  left: 86px;
  top: 294px;
  width: 800px;
  height: 2px;
}

.grid-line.head {
  left: 82px;
  top: 328px;
  width: 800px;
  height: 2px;
}

.grid-line.bottom {
  left: 86px;
  top: 524px;
  width: 800px;
  height: 2px;
}

.grid-line.side {
  left: 82px;
  top: 294px;
  width: 2px;
  height: 231px;
}

.grid-head {
  position: absolute;
  top: 302px;
  font-family: Lato, sans-serif;
  font-size: 18.200px;
  line-height: 20px;
  color: #444;
}

.handle {
  position: absolute;
  left: 76px;
  width: 11px;
  height: 10px;
  box-sizing: border-box;
  border: 2px solid #225c9c;
  background: #fff;
}

.grid-btn {
  position: absolute;
  top: 573px;
  width: 180px;
  height: 36px;
  box-sizing: border-box;
  border: 2px solid #aaa;
  border-radius: 8px;
  background: linear-gradient(rgba(205, 205, 205, 0.92), rgba(186, 186, 186, 0.92));
  display: flex;
  align-items: center;
  justify-content: center;
  font-family: Lato, sans-serif;
  font-size: 18px;
  color: #444;
}

/* right pane */
.right {
  flex: none;
  width: 525px;
  display: flex;
  flex-direction: column;
  background: #f0f4f8;
}

.props-dots {
  margin-left: 17px;
}

.props-title {
  margin-left: 17px;
}

.sort-btn {
  position: absolute;
  left: 273px;
  top: 5px;
  width: 36px;
  height: 36px;
  background: #225c9c;
  color: #fff;
  display: flex;
  align-items: center;
  justify-content: center;
}

.sort {
  width: 21px;
  height: 14px;
}

.az {
  position: absolute;
  left: 325px;
  top: 11px;
  width: 22px;
  height: 22px;
}

.az-text {
  font-family: Roboto, sans-serif;
  font-size: 14px;
  font-weight: 500;
}

.props-plus {
  position: absolute;
  left: 384px;
  top: 11px;
}

.props-trash {
  left: 431px;
}

.props-popout {
  left: 488px;
}

.info {
  position: relative;
  height: 84px;
  flex: none;
  box-sizing: border-box;
  border-bottom: 2px solid #d8dde2;
  margin-left: 2px;
}

.info-grid {
  position: absolute;
  left: 15px;
  top: 26px;
  width: 32px;
  height: 32px;
}

.info-table {
  position: absolute;
  left: 60px;
  top: 1px;
  display: grid;
  grid-template-columns: 65px auto;
  column-gap: 16px;
  grid-auto-rows: 42px;
  align-items: center;
}

.info-key {
  text-align: right;
}

.info-doc {
  position: absolute;
  left: 470px;
  top: 28px;
  width: 30px;
  height: 30px;
}

.props {
  position: relative;
  flex: 1;
  min-height: 0;
  overflow: hidden;
  padding-top: 1px;
}

.prop-row {
  height: 42px;
  display: flex;
  align-items: center;
}

.prop-label {
  position: relative;
  width: 283px;
  flex: none;
  box-sizing: border-box;
  white-space: nowrap;
}

.prop-caret {
  position: absolute;
  margin-left: -29px;
  top: 10px;
}

.prop-value {
  position: relative;
  width: 224px;
  height: 42px;
  flex: none;
  display: flex;
  align-items: center;
  box-sizing: border-box;
}

.prop-value.active {
  background: #aedff7;
}

.link-slot {
  width: 50px;
  flex: none;
  display: flex;
  align-items: center;
  padding-left: 11px;
  box-sizing: border-box;
}

.link-slot.boxed {
  position: absolute;
  left: 2px;
  top: 0;
  width: 39px;
  height: 39px;
  border: 3px solid #cf1722;
  padding-left: 7px;
}

.link {
  width: 21px;
  height: 14px;
  color: #12a9e8;
}

.link.i-link-plus {
  width: 21px;
  height: 18px;
  color: #000;
}

.value-text {
  font-style: italic;
  font-size: 21.200px;
  color: #666;
}

.pencil {
  position: absolute;
  left: 196px;
  top: 12px;
  width: 18px;
  height: 18px;
}

.swatch {
  position: absolute;
  left: 188px;
  top: 8px;
  width: 26px;
  height: 26px;
  box-sizing: border-box;
  border: 2px solid #999;
  border-radius: 2px;
  background: #000;
}

.props-thumb {
  left: 510px;
  top: 343px;
  height: 46px;
}

.events-title {
  margin-left: 8px;
}

.events-plus {
  position: absolute;
  left: 488px;
  top: 11px;
}

.events {
  height: 166px;
  flex: none;
}

.event-row {
  position: relative;
  height: 42px;
  display: flex;
  align-items: center;
  padding-left: 49px;
}

.event-label {
  margin: 2px 0 0 -1px;
}

.bolt {
  width: 12px;
  height: 20px;
  margin-right: 15px;
}

.event-plus {
  position: absolute;
  left: 493px;
  top: 10px;
}
</style>
